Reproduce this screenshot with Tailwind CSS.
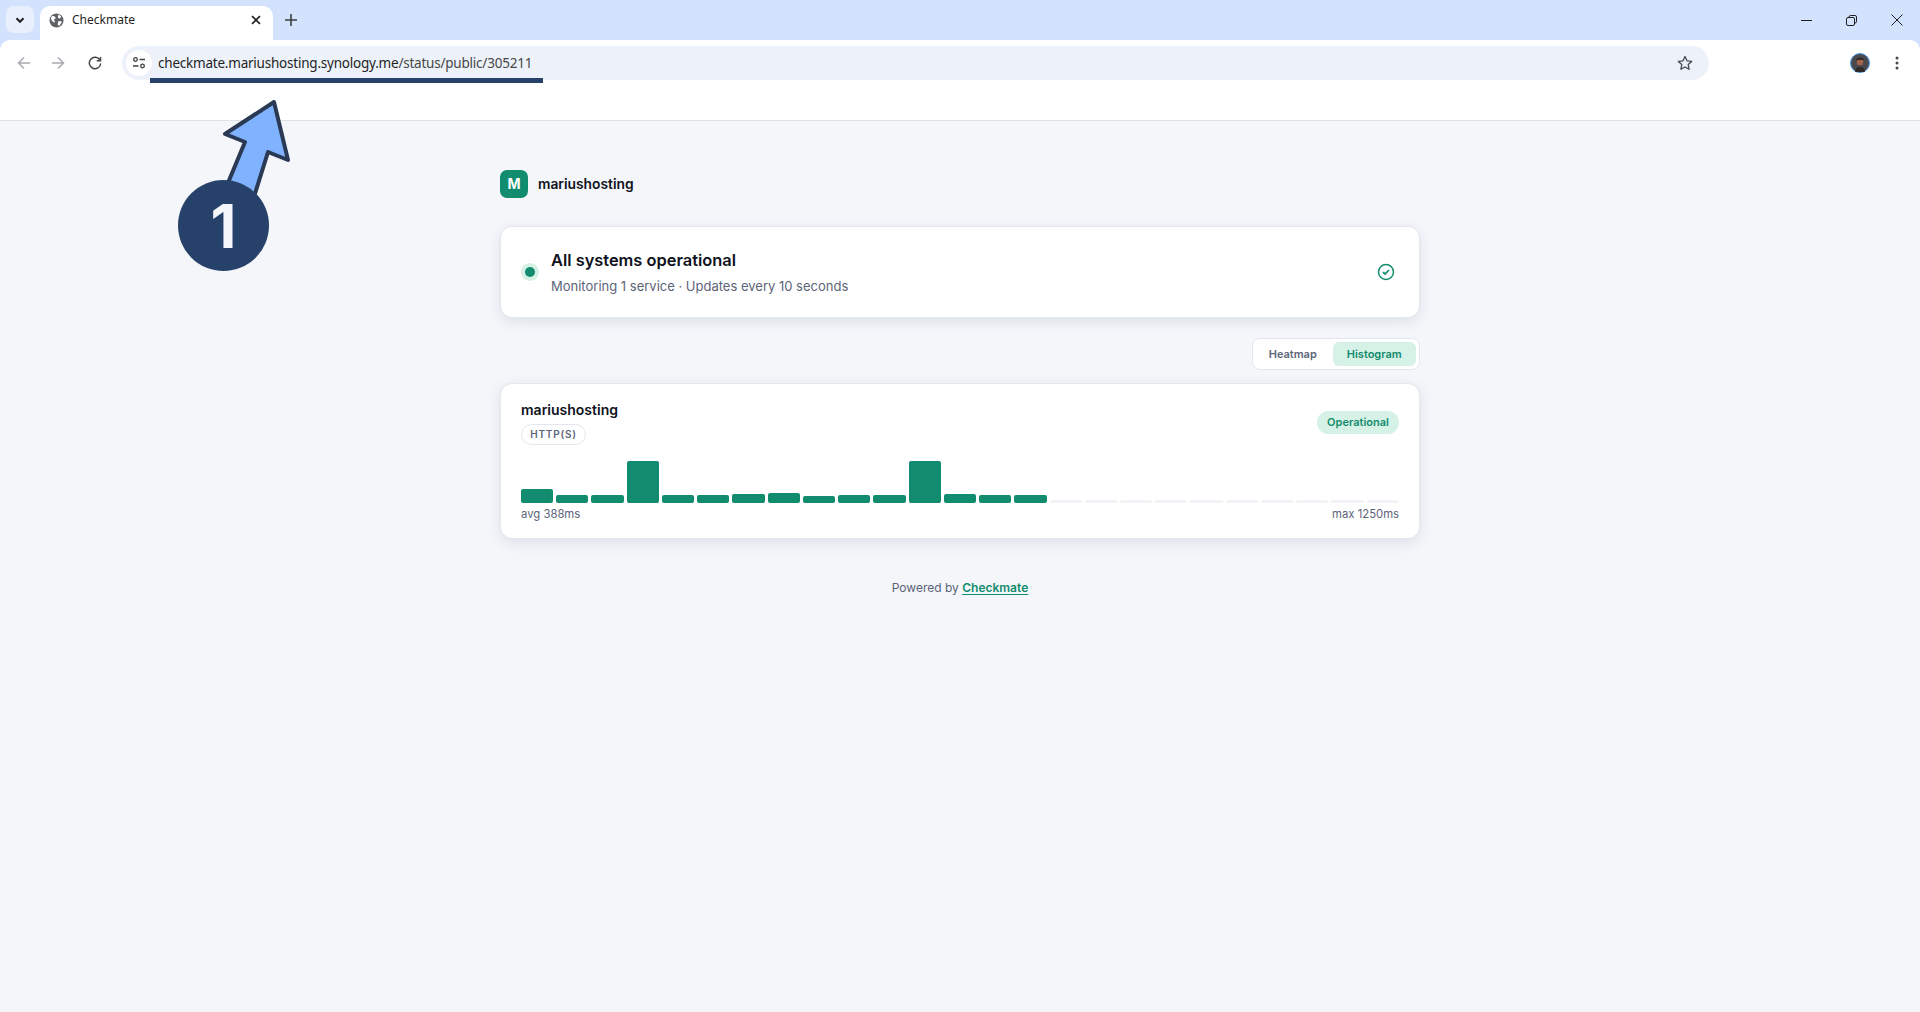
<!DOCTYPE html>
<html lang="en">
<head>
    <meta charset="UTF-8">
    <title>Checkmate</title>
    <script src="https://cdn.jsdelivr.net/npm/@tailwindcss/browser@4"></script>
</head>
<body class="relative h-[1012px] overflow-hidden bg-[#f4f6fa] font-['Inter',sans-serif]">

    <!-- Browser chrome -->
    <header class="bg-[#d3e3fd] font-['Noto_Sans',sans-serif]">
        <div class="h-10 flex items-end pl-[6px]">
            <div class="w-[28px] h-[27px] mb-[7px] rounded-lg bg-[#e9f0fd] flex items-center justify-center">
                <svg class="w-3 h-3" viewBox="0 0 12 12" fill="none" stroke="#1f1f1f" stroke-width="2"><path d="M2.5 4.2 6 7.8l3.5-3.6"/></svg>
            </div>
            <div class="w-[233px] h-[34px] ml-[6px] pb-[6px] bg-white rounded-t-[10px] flex items-center pl-[9px] pr-[10px]">
                <svg class="w-[15px] h-[15px] shrink-0" viewBox="0 0 16 16"><circle cx="8" cy="8" r="7.5" fill="#5f6368"/><path d="M3 3.5c2-.5 3.5 0 4 1.500.3 1-.7 1.500-1.500 1.500-.3 1.500 1 2 .5 3.500-1.500 0-3.500-2-4-4.500zM10 1.500l3 2-1.500 2.500-2-1zM9.500 9l3.500-.5.500 1.500-2.500 3.500-1.500-.5z" fill="#fff"/></svg>
                <span class="ml-[8px] text-[12px] text-[#1f1f1f] flex-1">Checkmate</span>
                <svg class="w-[10px] h-[10px] mr-[2px]" viewBox="0 0 10 10" stroke="#1f1f1f" stroke-width="1.700"><path d="M1 1l8 8M9 1l-8 8"/></svg>
            </div>
            <svg class="w-3 h-3 ml-[12px] mb-[14px]" viewBox="0 0 12 12" stroke="#3c4043" stroke-width="1.600"><path d="M6 0v12M0 6h12"/></svg>
            <div class="ml-auto flex items-center mb-[14px] pr-[17px] gap-[34px]">
                <svg class="w-[11px] h-[11px]" viewBox="0 0 11 11" stroke="#1f1f1f" stroke-width="1"><path d="M0 5.500h11"/></svg>
                <svg class="w-[11px] h-[11px]" viewBox="0 0 11 11" fill="none" stroke="#1f1f1f" stroke-width="1"><rect x=".5" y="2.500" width="8" height="8" rx="1.500"/><path d="M3 2.500V2a1.500 1.500 0 0 1 1.500-1.500H9A1.500 1.500 0 0 1 10.500 2v4.500A1.500 1.500 0 0 1 9 8h-.5"/></svg>
                <svg class="w-[12px] h-[12px]" viewBox="0 0 12 12" stroke="#1f1f1f" stroke-width="1"><path d="M.5.500l11 11M11.500.500l-11 11"/></svg>
            </div>
        </div>
        <div class="h-[81px] bg-white rounded-t-[10px] border-b border-[#dfe1e5]">
            <div class="h-[45px] flex items-center pl-[17px] pr-[21px]">
                <svg class="w-[14px] h-[14px]" viewBox="0 0 14 14" fill="none" stroke="#a8abaf" stroke-width="1.500"><path d="M13 7H1.500M7 1.500 1.500 7 7 12.500"/></svg>
                <svg class="w-[14px] h-[14px] ml-[20px]" viewBox="0 0 14 14" fill="none" stroke="#a8abaf" stroke-width="1.500"><path d="M1 7h11.500M7 1.500 12.500 7 7 12.500"/></svg>
                <svg class="w-[14px] h-[14px] ml-[23px]" viewBox="0 0 14 14" fill="none" stroke="#45474a" stroke-width="1.500"><path d="M12 4.200A5.700 5.700 0 1 0 12.700 7.500"/><path d="M12.500 1v3.800H8.700" /></svg>
                <div class="w-[1587px] h-[34px] ml-[20px] rounded-full bg-[#edf2fa] flex items-center pl-[4px] pr-[16px]">
                    <div class="w-[26px] h-[26px] rounded-full bg-white flex items-center justify-center">
                        <svg class="w-[14px] h-[14px]" viewBox="0 0 14 14" fill="none" stroke="#3c4043" stroke-width="1.300"><circle cx="3.500" cy="3.500" r="1.800"/><path d="M7.500 3.500H13M1 10h5.500"/><circle cx="10.500" cy="10" r="1.800"/></svg>
                    </div>
                    <span class="ml-[6px] pt-[2px] text-[13.5px] text-[#1f1f1f] tracking-[-0.22px]">checkmate.mariushosting.synology.me<span class="text-[#474747]">/status/public/305211</span></span>
                    <svg class="w-[16px] h-[16px] ml-auto" viewBox="0 0 16 16" fill="none" stroke="#45474a" stroke-width="1.300" stroke-linejoin="round"><path d="M8 1.500l2 4.300 4.700.6-3.500 3.200.9 4.700L8 12l-4.100 2.300.9-4.700L1.300 6.400 6 5.800z"/></svg>
                </div>
                <svg class="ml-auto mr-[25px] w-[20px] h-[20px]" viewBox="0 0 20 20"><circle cx="10" cy="10" r="9.500" fill="#4a4a4e" stroke="#4a9be8"/><path d="M6.500 8c0-3 7-3.500 7 0l-1 4h-5z" fill="#a4654c"/><path d="M6 8c0-4 8-4.500 8-.5-2-1-6-1-8 .5z" fill="#2a2022"/><path d="M5 19c.5-4 2-5 5-5s4.500 1 5 5z" fill="#2e2a2a"/></svg>
                <svg class="w-[4px] h-[14px]" viewBox="0 0 4 14" fill="#45474a"><circle cx="2" cy="2" r="1.500"/><circle cx="2" cy="7" r="1.500"/><circle cx="2" cy="12" r="1.500"/></svg>
            </div>
        </div>
    </header>

    <!-- Status page -->
    <main class="w-[920px] ml-[500px] pt-[48px]">
        <div class="flex items-center gap-[10px] h-[29px]">
            <div class="w-[28px] h-[28px] rounded-[7px] bg-[#128c6e] text-white text-[14px] font-bold flex items-center justify-center">M</div>
            <span class="mt-[1px] text-[13.8px] font-semibold text-[#0f1220]">mariushosting</span>
        </div>

        <section class="mt-[28px] h-[92px] bg-white border border-[#e3e6ee] rounded-[12px] shadow-[0_4px_14px_rgba(30,40,80,0.1)] flex items-center pl-[20px] pr-[24px]">
            <div class="w-[18px] h-[18px] rounded-full bg-[#d6f1e6] flex items-center justify-center">
                <div class="w-[10px] h-[10px] rounded-full bg-[#128c6e]"></div>
            </div>
            <div class="ml-[12px]">
                <h1 class="text-[16.4px] leading-[20px] font-semibold text-[#0f1220]">All systems operational</h1>
                <p class="mt-[7px] text-[13px] leading-[18px] text-[#5b6478]">Monitoring 1 service · Updates every 10 seconds</p>
            </div>
            <svg class="w-[18px] h-[18px] ml-auto" viewBox="0 0 18 18" fill="none" stroke="#128c6e" stroke-width="1.500"><circle cx="9" cy="9" r="7.500"/><path d="M6 9.200 8 11l4-4" stroke-width="1.700"/></svg>
        </section>

        <div class="mt-[20px] flex justify-end">
            <div class="w-[168px] h-[32px] bg-white border border-[#e3e6ee] rounded-[8px] flex items-center pr-[3px] text-[11px] font-semibold">
                <span class="w-[80px] text-center text-[#5b6478]">Heatmap</span>
                <span class="w-[84px] h-[24px] rounded-[6px] bg-[#d6f1e6] text-[#128c6e] flex items-center justify-center">Histogram</span>
            </div>
        </div>

        <section class="mt-[13px] h-[156px] bg-white border border-[#e3e6ee] rounded-[12px] shadow-[0_4px_14px_rgba(30,40,80,0.1)] px-[20px] pt-[17px]">
            <div class="flex justify-between items-start">
                <div>
                    <h2 class="text-[14px] leading-[18px] font-semibold text-[#0f1220]">mariushosting</h2>
                    <span class="mt-[5px] h-[21px] w-[65px] rounded-full border border-[#e3e6ee] text-[10px] font-semibold tracking-[0.8px] text-[#5b6478] flex items-center justify-center">HTTP(S)</span>
                </div>
                <span class="mt-[10px] w-[82px] h-[23px] rounded-full bg-[#d6f1e6] text-[#128c6e] text-[11px] font-semibold flex items-center justify-center">Operational</span>
            </div>
            <div class="mt-[16px] h-[42px] flex items-end gap-[3px]">
                <div class="flex-1 rounded-[2px] bg-[#128c6e] h-[14px]"></div>
                <div class="flex-1 rounded-[2px] bg-[#128c6e] h-[8px]"></div>
                <div class="flex-1 rounded-[2px] bg-[#128c6e] h-[8px]"></div>
                <div class="flex-1 rounded-[2px] bg-[#128c6e] h-[42px]"></div>
                <div class="flex-1 rounded-[2px] bg-[#128c6e] h-[8px]"></div>
                <div class="flex-1 rounded-[2px] bg-[#128c6e] h-[8px]"></div>
                <div class="flex-1 rounded-[2px] bg-[#128c6e] h-[9px]"></div>
                <div class="flex-1 rounded-[2px] bg-[#128c6e] h-[10px]"></div>
                <div class="flex-1 rounded-[2px] bg-[#128c6e] h-[7px]"></div>
                <div class="flex-1 rounded-[2px] bg-[#128c6e] h-[8px]"></div>
                <div class="flex-1 rounded-[2px] bg-[#128c6e] h-[8px]"></div>
                <div class="flex-1 rounded-[2px] bg-[#128c6e] h-[42px]"></div>
                <div class="flex-1 rounded-[2px] bg-[#128c6e] h-[9px]"></div>
                <div class="flex-1 rounded-[2px] bg-[#128c6e] h-[8px]"></div>
                <div class="flex-1 rounded-[2px] bg-[#128c6e] h-[8px]"></div>
                <div class="flex-1 rounded-[2px] bg-[#f1f3f7] h-[3px]"></div>
                <div class="flex-1 rounded-[2px] bg-[#f1f3f7] h-[3px]"></div>
                <div class="flex-1 rounded-[2px] bg-[#f1f3f7] h-[3px]"></div>
                <div class="flex-1 rounded-[2px] bg-[#f1f3f7] h-[3px]"></div>
                <div class="flex-1 rounded-[2px] bg-[#f1f3f7] h-[3px]"></div>
                <div class="flex-1 rounded-[2px] bg-[#f1f3f7] h-[3px]"></div>
                <div class="flex-1 rounded-[2px] bg-[#f1f3f7] h-[3px]"></div>
                <div class="flex-1 rounded-[2px] bg-[#f1f3f7] h-[3px]"></div>
                <div class="flex-1 rounded-[2px] bg-[#f1f3f7] h-[3px]"></div>
                <div class="flex-1 rounded-[2px] bg-[#f1f3f7] h-[3px]"></div>
            </div>
            <div class="mt-[4px] flex justify-between text-[11.3px] leading-[14px] text-[#5b6478]">
                <span>avg 388ms</span>
                <span>max 1250ms</span>
            </div>
        </section>

        <p class="mt-[41px] text-center text-[12px] leading-[16px] text-[#5b6478]">Powered by <a class="font-semibold text-[#128c6e] underline underline-offset-2" href="#">Checkmate</a></p>
    </main>

    <!-- Tutorial annotation over the page -->
    <div class="absolute left-[150px] top-[78px] w-[393px] h-[5px] bg-[#27426a]"></div>
    <svg class="absolute left-[215px] top-[95px] w-[80px] h-[100px]" viewBox="215 95 80 100" fill="#80b3ff" stroke="#2a3a55" stroke-width="4" stroke-linejoin="round"><path d="M274 102 225 134l20 8-20 48 28 10 15-48 20 8z"/></svg>
    <div class="absolute left-[178px] top-[180px] w-[91px] h-[91px] rounded-full bg-[#27426a] text-[#f4f6fa] text-[60px] font-bold flex items-center justify-center font-['Inter',sans-serif]">1</div>

</body>
</html>
